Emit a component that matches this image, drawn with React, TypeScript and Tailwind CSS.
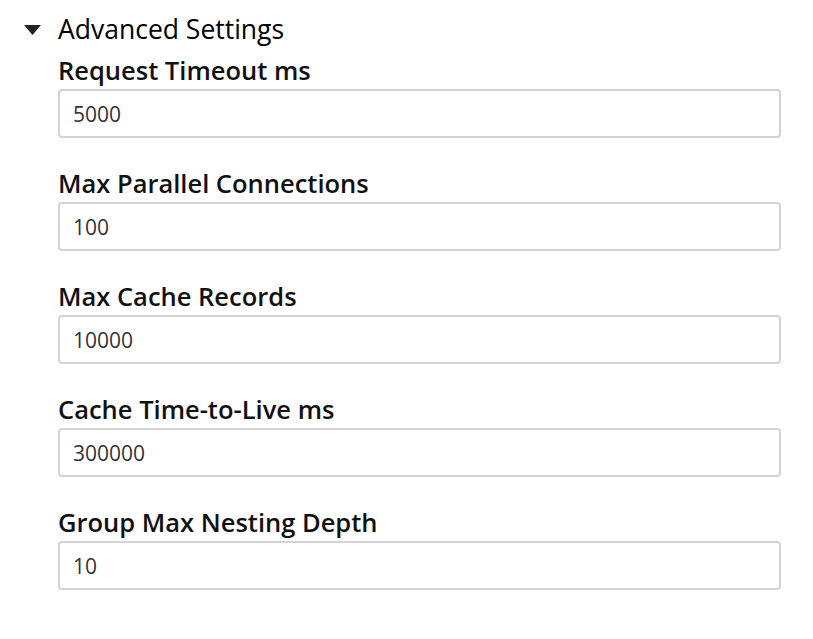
const fields = [
  { label: "Request Timeout ms", value: "5000" },
  { label: "Max Parallel Connections", value: "100" },
  { label: "Max Cache Records", value: "10000" },
  { label: "Cache Time-to-Live ms", value: "300000" },
  { label: "Group Max Nesting Depth", value: "10" }
];

export default function App() {
  return (
    <div className="min-h-[639px] bg-white font-['Open_Sans',sans-serif] text-black">
      <div className="pt-[11px] pl-6 pr-8">
        <div className="flex items-center">
          <svg width="17" height="10" viewBox="0 0 17 10" className="mr-[17px] mt-[2px]">
            <path d="M0 0h17L8.5 10z" fill="#222" />
          </svg>
          <span className="text-[26.5px] leading-[36px]">Advanced Settings</span>
        </div>
        <div className="mt-[8px] pl-[34px]">
          {fields.map((f, i) => (
            <div key={f.label} className={i === 0 ? "" : "mt-[30px]"}>
              <label className="block text-[25.5px] font-semibold leading-[30px] text-[#111]">{f.label}</label>
              <input
                readOnly
                value={f.value}
                className="mt-[4px] block h-[49px] w-full rounded-[4px] border-2 border-[#d4d4d4] px-[13px] text-[21px] text-[#333] outline-none"
              />
            </div>
          ))}
        </div>
      </div>
    </div>
  );
}
